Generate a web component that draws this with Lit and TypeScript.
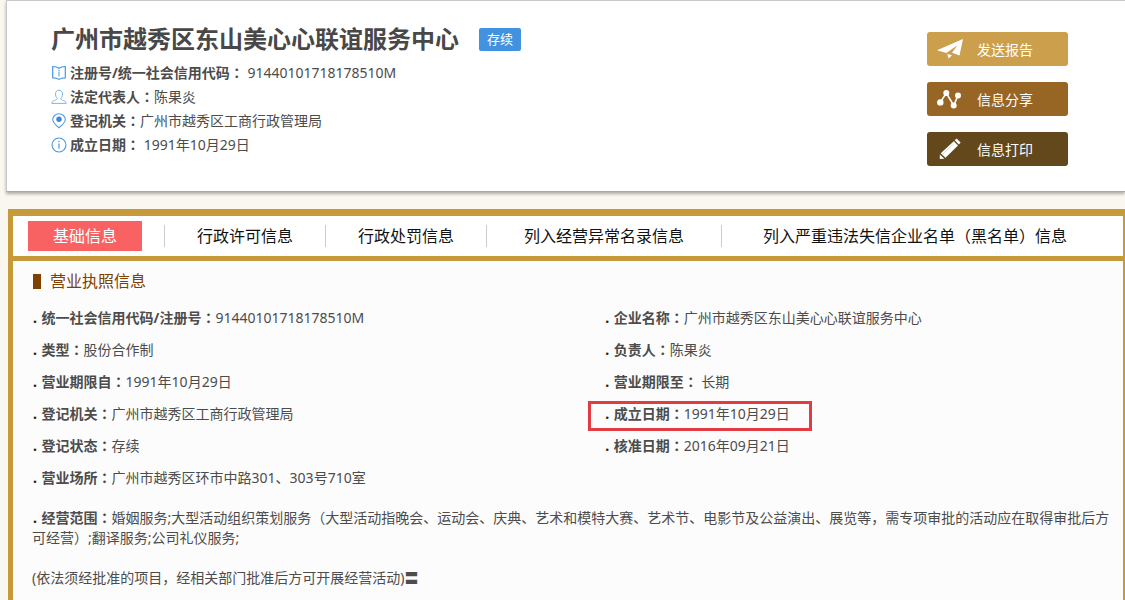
import { LitElement, html, svg, css } from "lit";
import { customElement } from "lit/decorators.js";
import { classMap } from "lit/directives/class-map.js";

interface Field {
  label: string;
  value: string;
  marked?: boolean;
}

const bookIcon = svg`<svg viewBox="0 0 16 16" aria-hidden="true">
  <path d="M1.700 1.500C4 1.500 6.500 2 8 3.200C9.500 2 12 1.500 14.300 1.500V12.800C12 12.800 9.500 13.200 8 14.400C6.500 13.200 4 12.800 1.700 12.800Z" fill="none" stroke="#4a97e0" stroke-width="1.200"/>
  <path d="M8 6.500V11.500" stroke="#4a97e0" stroke-width="1"/><circle cx="8" cy="5.200" r=".7" fill="#4a97e0"/>
</svg>`;
const personIcon = svg`<svg viewBox="0 0 16 16" aria-hidden="true">
  <path d="M6.200 9.300C5 8.300 4.500 6.800 4.500 5C4.500 2.600 5.800 1.200 8 1.200S11.500 2.600 11.500 5C11.500 6.800 11 8.300 9.800 9.300C10 10.800 11 11.200 12.600 11.500C14.200 11.900 15 12.700 15.200 14.400H.8C1 12.700 1.800 11.900 3.400 11.500C5 11.200 6 10.800 6.200 9.300Z" fill="none" stroke="#7fb3ea" stroke-width="1"/>
</svg>`;
const pinIcon = svg`<svg viewBox="0 0 16 16" aria-hidden="true">
  <path d="M8 14.800C4.500 12 1.700 9.500 1.700 6.500A6.300 5.700 0 0 1 14.300 6.500C14.300 9.500 11.500 12 8 14.800Z" fill="none" stroke="#5a9de0" stroke-width="1.100"/>
  <circle cx="8" cy="6.300" r="2.700" fill="#3b86dc"/>
</svg>`;
const infoIcon = svg`<svg viewBox="0 0 16 16" aria-hidden="true">
  <circle cx="8" cy="8" r="7" fill="none" stroke="#4a97e0" stroke-width="1.100"/>
  <path d="M8 6.500V11.800" stroke="#4a97e0" stroke-width="1.200"/><circle cx="8" cy="4.500" r=".8" fill="#4a97e0"/>
</svg>`;
const planeIcon = svg`<svg viewBox="0 0 26 22" aria-hidden="true">
  <path d="M0 12.300L26 1L22.500 17.600L15 14.800L20.500 7.300L9.300 15.100Z" fill="#fff"/>
  <path d="M10.400 16L15 17.200L11.600 20.600Z" fill="#fff"/>
</svg>`;
const shareIcon = svg`<svg viewBox="0 0 26 22" aria-hidden="true">
  <path d="M3.300 14.400L9.300 5L16.700 17.500L21 7.500" fill="none" stroke="#fff" stroke-width="1.600"/>
  <circle cx="3.300" cy="14.400" r="3.200" fill="#fff"/><circle cx="9.300" cy="5" r="3" fill="#fff"/>
  <circle cx="16.700" cy="17.600" r="3" fill="#fff"/><circle cx="21" cy="7.500" r="3" fill="#fff"/>
</svg>`;
const penIcon = svg`<svg viewBox="0 0 26 22" aria-hidden="true">
  <path d="M2.800 16.500V21L7.400 20.700Z" fill="#fff"/>
  <path d="M3.700 15.300L16.800 3.200L21 7.400L8.500 19.800Z" fill="#fff"/>
  <path d="M17.700 2.300L19.600 .6L23.600 4.600L21.900 6.500Z" fill="#fff"/>
  <path d="M5.300 16.500L17 5.500" stroke="#c9c2b4" stroke-width=".6"/>
</svg>`;

@customElement("app-root")
export class AppRoot extends LitElement {
  static styles = css`
    :host {
      display: flex;
      flex-direction: column;
      min-height: 100vh;
      box-sizing: border-box;
      padding-left: 6px;
      background: #faf7f0;
      color: #4c4c4c;
      font: 14px/20px "Noto Sans", "Noto Sans CJK SC", sans-serif;
    }
    h1, h2, ul, p { margin: 0; padding: 0; }
    ul { list-style: none; }
    .card {
      display: flex;
      justify-content: space-between;
      align-items: flex-start;
      padding: 20px 57px 25px 44px;
      border: 1px solid #c9c9c9;
      border-right: 0;
      border-bottom-color: #aaa;
      background: #fff;
      box-shadow: 0 2px 3px #b0aca4;
    }
    .heading { display: flex; align-items: center; gap: 20px; height: 36px; }
    .heading h1 { font-size: 24px; line-height: 36px; color: #484848; }
    .badge {
      padding: 0 8px;
      border-radius: 2px;
      background: #4292e0;
      color: #fff;
      font-size: 13px;
      line-height: 23px;
    }
    .facts { padding-top: 4px; }
    .facts li { display: flex; align-items: center; line-height: 24px; white-space: pre; }
    .facts svg { width: 16px; height: 16px; margin-right: 3px; }
    .label { font-weight: bold; }
    .colon { font-family: "Noto Sans CJK TC", sans-serif; line-height: 1; }
    .actions { display: grid; gap: 16px; padding-top: 11px; }
    .action {
      display: flex;
      align-items: center;
      gap: 14px;
      width: 141px;
      height: 34px;
      padding: 0 10px;
      border: 0;
      border-radius: 3px;
      color: #fff;
      font: inherit;
      cursor: pointer;
    }
    .action svg { width: 26px; height: 22px; }
    .action span { padding-top: 1px; }
    .send { background: #cb9f4c; }
    .share { background: #986624; }
    .print { background: #63481b; }
    .panel {
      flex: 1;
      margin: 17px 0 0 2px;
      border: solid #c69a38;
      border-width: 7px 2px 0 5px;
      background: #fcfcfc;
    }
    .tabs {
      display: flex;
      align-items: center;
      height: 40px;
      border-bottom: 5px solid #c69a38;
      background: #fff;
      font-size: 16px;
      white-space: nowrap;
    }
    .tab { padding: 0 32px; line-height: 22px; color: #111; text-decoration: none; }
    .tab + .tab { border-left: 1px solid #ccc; }
    .tab.medium { padding: 0 37px; }
    .tab.wide { padding: 0 41px; }
    .tab.current { padding: 0 22px 0 15px; }
    .current span {
      display: block;
      padding: 0 25px;
      margin: -4px 0;
      background: #f96263;
      color: #fff;
      line-height: 30px;
    }
    .body { padding: 8px 8px 20px 19px; }
    .section {
      display: flex;
      align-items: center;
      gap: 9px;
      color: #804000;
      font-size: 16px;
      font-weight: normal;
      line-height: 24px;
    }
    .section::before { content: ""; width: 8px; height: 15px; margin-left: 1px; background: #804000; }
    .fields { display: grid; grid-template-columns: 28fr 25fr; padding-top: 9px; }
    .fields li { line-height: 32px; grid-column: 1; }
    .fields li.right { grid-column: 2; }
    .item { position: relative; white-space: pre; }
    .dot { color: #222; font-weight: bold; white-space: pre; margin: 0 1px; }
    .marked::after {
      content: "";
      position: absolute;
      inset: -3px -22px -8px -16px;
      border: 3px solid #e23c42;
    }
    .scope { padding-top: 14px; }
    .note { padding-top: 20px; }
  `;

  private facts = [
    { icon: bookIcon, label: "注册号/统一社会信用代码", value: " 91440101718178510M" },
    { icon: personIcon, label: "法定代表人", value: "陈果炎" },
    { icon: pinIcon, label: "登记机关", value: "广州市越秀区工商行政管理局" },
    { icon: infoIcon, label: "成立日期", value: " 1991年10月29日" },
  ];

  private actions = [
    { kind: "send", icon: planeIcon, text: "发送报告" },
    { kind: "share", icon: shareIcon, text: "信息分享" },
    { kind: "print", icon: penIcon, text: "信息打印" },
  ];

  private tabs = [
    { text: "基础信息", size: "current" },
    { text: "行政许可信息", size: "" },
    { text: "行政处罚信息", size: "" },
    { text: "列入经营异常名录信息", size: "medium" },
    { text: "列入严重违法失信企业名单（黑名单）信息", size: "wide" },
  ];

  private fields: Field[] = [
    { label: "统一社会信用代码/注册号", value: "91440101718178510M" },
    { label: "企业名称", value: "广州市越秀区东山美心心联谊服务中心" },
    { label: "类型", value: "股份合作制" },
    { label: "负责人", value: "陈果炎" },
    { label: "营业期限自", value: "1991年10月29日" },
    { label: "营业期限至", value: " 长期" },
    { label: "登记机关", value: "广州市越秀区工商行政管理局" },
    { label: "成立日期", value: "1991年10月29日", marked: true },
    { label: "登记状态", value: "存续" },
    { label: "核准日期", value: "2016年09月21日" },
    { label: "营业场所", value: "广州市越秀区环市中路301、303号710室" },
  ];

  private label(text: string) {
    return html`<span class="label">${text}<span class="colon">：</span></span>`;
  }

  render() {
    return html`
      <header class="card">
        <div>
          <div class="heading">
            <h1>广州市越秀区东山美心心联谊服务中心</h1>
            <span class="badge">存续</span>
          </div>
          <ul class="facts">
            ${this.facts.map((f) => html`<li>${f.icon}${this.label(f.label)}<span>${f.value}</span></li>`)}
          </ul>
        </div>
        <div class="actions">
          ${this.actions.map(
            (a) => html`<button type="button" class="action ${a.kind}">${a.icon}<span>${a.text}</span></button>`
          )}
        </div>
      </header>
      <main class="panel">
        <nav class="tabs">
          ${this.tabs.map((t) => html`<a href="#" class="tab ${t.size}"><span>${t.text}</span></a>`)}
        </nav>
        <div class="body">
          <h2 class="section">营业执照信息</h2>
          <ul class="fields">
            ${this.fields.map(
              (f, i) => html`<li class=${classMap({ right: i % 2 === 1 })}><span class=${classMap({ item: true, marked: !!f.marked })}><span class="dot">. </span>${this.label(f.label)}${f.value}</span></li>`
            )}
          </ul>
          <p class="scope"><span class="dot">. </span>${this.label("经营范围")}婚姻服务;大型活动组织策划服务（大型活动指晚会、运动会、庆典、艺术和模特大赛、艺术节、电影节及公益演出、展览等，需专项审批的活动应在取得审批后方可经营）;翻译服务;公司礼仪服务;</p>
          <p class="note">(依法须经批准的项目，经相关部门批准后方可开展经营活动)〓</p>
        </div>
      </main>
    `;
  }
}
